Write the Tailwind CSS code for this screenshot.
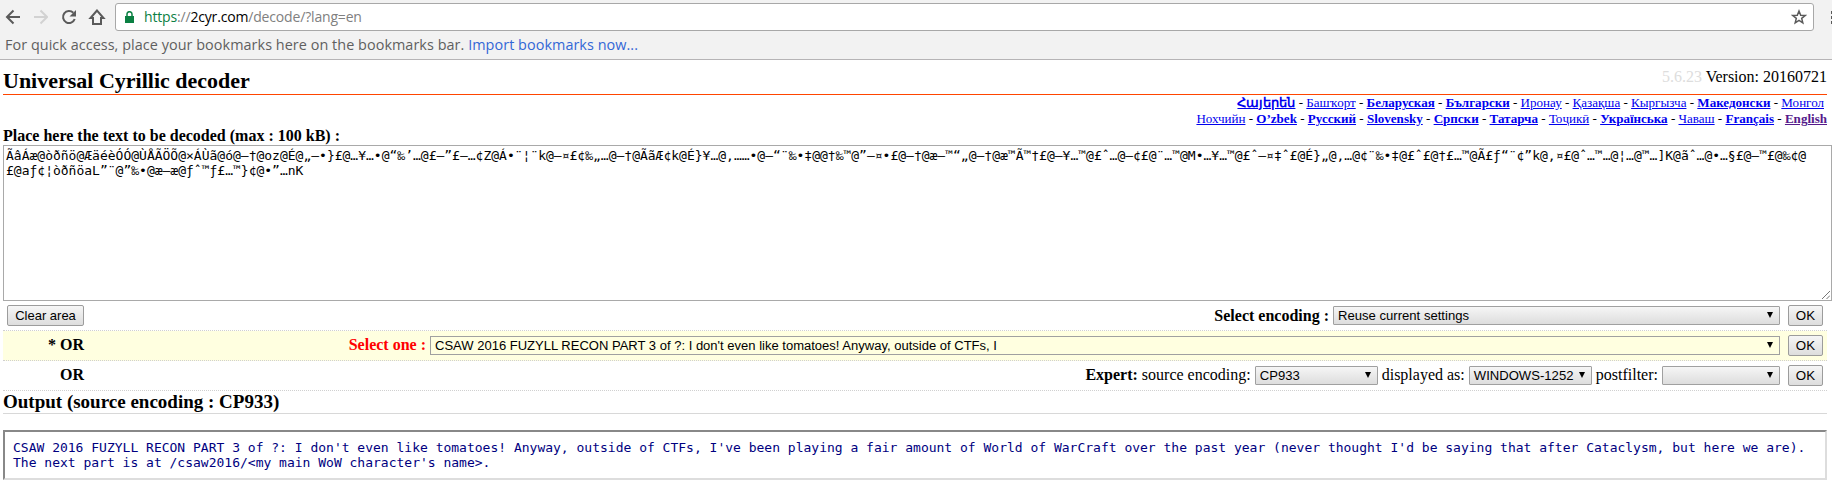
<!DOCTYPE html>
<html lang="en">
<head>
<meta charset="utf-8">
<title>Universal Cyrillic decoder</title>
<script src="https://cdn.jsdelivr.net/npm/@tailwindcss/browser@4"></script>
</head>
<body class="w-[1832px] h-[493px] overflow-hidden bg-white text-black text-base leading-[18px] font-['Liberation_Serif',serif]">
<header class="h-[60px] bg-[#f2f2f2] border-b border-[#b6b4b6] font-['Open_Sans',sans-serif]">
  <div class="flex items-center h-[34px] pl-[4px]">
    <div class="flex gap-[12px] w-[111px] shrink-0">
      <svg class="w-4 h-4 shrink-0" viewBox="0 0 16 16" fill="none" stroke="#5a5a5a" stroke-width="2"><path d="M16 8H3.500M9.500 1.500L3 8l6.500 6.500"/></svg>
      <svg class="w-4 h-4 shrink-0" viewBox="0 0 16 16" fill="none" stroke="#d2d2d2" stroke-width="2"><path d="M2 8h12.500M8.500 1.500L15 8l-6.500 6.500"/></svg>
      <svg class="w-4 h-4 shrink-0" viewBox="0 0 16 16" fill="none" stroke="#5a5a5a" stroke-width="2"><path d="M14.700 10A6 6 0 1 1 13.300 3.800"/><path d="M16 1v6.500H9.500z" fill="#5a5a5a" stroke="none"/></svg>
      <svg class="w-4 h-4 shrink-0 overflow-visible" viewBox="0 0 16 16" fill="none" stroke="#5a5a5a" stroke-width="2"><path d="M9 1.500L2.500 9H5v6h8V9h2.500z"/></svg>
    </div>
    <div class="flex items-center w-[1699px] h-[28px] shrink-0 bg-white border border-[#a8a8a8] rounded-[3px] pl-[9px] pr-[6px]">
      <svg class="w-[9px] h-[12px]" viewBox="0 0 9 12"><path d="M0 5h9v7H0z" fill="#0b8043"/><path d="M2 6V3a2.500 2.300 0 0 1 5 0v3" fill="none" stroke="#0b8043" stroke-width="1.500"/></svg>
      <div class="ml-[10px] text-[14px] tracking-[-0.17px] text-[#808080] whitespace-nowrap"><span class="text-[#0b8043]">https</span>://<span class="text-black">2cyr.com</span>/decode/?lang=en</div>
      <svg class="ml-auto w-4 h-4" viewBox="0 0 16 16" fill="none" stroke="#5a5a5a" stroke-width="1.500"><path d="M8 2l1.700 4.200 4.500.3-3.500 2.900 1.100 4.400L8 11.400l-3.800 2.400 1.100-4.400L1.800 6.500l4.500-.3z"/></svg>
    </div>
    <div class="flex flex-col gap-[2px] ml-[17px] shrink-0"><span class="size-[3px] bg-[#5a5a5a]"></span><span class="size-[3px] bg-[#5a5a5a]"></span><span class="size-[3px] bg-[#5a5a5a]"></span></div>
  </div>
  <div class="pl-[5px] h-[22px] leading-[22px] text-[14.400px] tracking-[0.055px] text-[#5f5f5f] whitespace-nowrap">For quick access, place your bookmarks here on the bookmarks bar. <span class="text-[#3367d6]">Import bookmarks now...</span></div>
</header>
<main class="ml-[3px] w-[1829px]">
  <div class="flex justify-between w-[1824px] h-[35px] border-b border-[#ff4500]">
    <h1 class="text-[22px] font-bold leading-[24px] pt-[9px]">Universal Cyrillic decoder</h1>
    <div class="pt-[8px]"><span class="text-[#ddd]">5.6.23</span> Version: 20160721</div>
  </div>
  <nav class="w-[1824px] text-right text-[13.050px] h-[32px] leading-[16px] text-black [&_a]:text-[#00e] [&_a]:underline [&_b_a]:font-bold">
    <div class="pr-[3px]"><b><a>Հայերեն</a></b> - <a>Башҡорт</a> - <b><a>Беларуская</a></b> - <b><a>Български</a></b> - <a>Иронау</a> - <a>Қазақша</a> - <a>Кыргызча</a> - <b><a>Македонски</a></b> - <a>Монгол</a></div>
    <div><a>Нохчийн</a> - <b><a>O’zbek</a></b> - <b><a>Русский</a></b> - <b><a>Slovensky</a></b> - <b><a>Српски</a></b> - <b><a>Татарча</a></b> - <a>Тоҷикӣ</a> - <b><a>Українська</a></b> - <a>Чаваш</a> - <b><a>Français</a></b> - <b><a class="text-[#551a8b]!">English</a></b></div>
  </nav>
  <div class="h-[18px] font-bold">Place here the text to be decoded (max : 100 kB) :</div>
  <div class="relative h-[156px] w-[1829px] border border-[#a9a9a9] px-[2px] py-[2px] font-['DejaVu_Sans_Mono',monospace] text-[13px] leading-[15px] whitespace-pre"><span>ÃâÁæ@òðñö@ÆäéèÓÓ@ÙÅÃÖÕ@×ÁÙã@ó@–†@oz@É@„–•}£@…¥…•@“‰’…@£–”£–…¢Z@Á•¨¦¨k@–¤£¢‰„…@–†@ÃãÆ¢k@É}¥…@‚……•@—“¨‰•‡@@†‰™@”–¤•£@–†@æ–™“„@–†@æ™Ã™†£@–¥…™@£ˆ…@—¢£@¨…™@M•…¥…™@£ˆ–¤‡ˆ£@É}„@‚…@¢¨‰•‡@£ˆ£@†£…™@Ã£ƒ“¨¢”k@‚¤£@ˆ…™…@¦…@™…]K@ãˆ…@•…§£@—™£@‰¢@</span>
<span>£@aƒ¢¦òðñöaL”¨@”‰•@æ–æ@ƒˆ™ƒ£…™}¢@•”…nK</span>
    <svg class="absolute right-[1px] bottom-[1px] w-[8px] h-[8px]" viewBox="0 0 8 8" stroke="#777" stroke-width="1"><path d="M0 8L8 0M4.500 8L8 4.500"/></svg>
  </div>
  <div class="w-[1824px]">
    <div class="flex items-center h-[30px] border-b border-dotted border-[#d0d0d0] pl-[4px] pr-[4px]">
      <button class="w-[77px] h-[21px] border border-[#9c9c9c] rounded-[2px] bg-linear-to-b from-[#f6f6f6] to-[#dddddd] font-['Liberation_Sans',sans-serif] text-[13px] leading-[18px]">Clear area</button>
      <b class="ml-auto mr-[4px]">Select encoding :</b>
      <div class="flex items-center justify-between w-[447px] h-[19px] border border-[#a0a0a0] rounded-[1px] bg-linear-to-b from-[#f6f6f6] to-[#dddddd] pl-[4px] pr-[6px] font-['Liberation_Sans',sans-serif] text-[13.100px] leading-[17px]"><span>Reuse current settings</span><svg class="w-[6px] h-[6px] mb-[2px]" viewBox="0 0 6 6"><path d="M0 0h6L3 6z"/></svg></div>
      <button class="ml-[8px] w-[35px] h-[21px] border border-[#9c9c9c] rounded-[2px] bg-linear-to-b from-[#f6f6f6] to-[#dddddd] font-['Liberation_Sans',sans-serif] text-[13.333px] leading-[18px]">OK</button>
    </div>
    <div class="flex items-center h-[30px] border-b border-dotted border-[#d0d0d0] bg-[#ffffe0] pr-[4px]">
      <b class="w-[81px] text-right pb-[2px]">* OR</b>
      <b class="ml-auto mr-[4px] text-[#f00] pb-[2px]">Select one :</b>
      <div class="flex items-center justify-between w-[1350px] h-[19px] border border-[#a0a0a0] pl-[4px] pr-[6px] font-['Liberation_Sans',sans-serif] text-[13.020px] leading-[17px]"><span>CSAW 2016 FUZYLL RECON PART 3 of ?: I don't even like tomatoes! Anyway, outside of CTFs, I</span><svg class="w-[6px] h-[6px] mb-[2px]" viewBox="0 0 6 6"><path d="M0 0h6L3 6z"/></svg></div>
      <button class="ml-[8px] w-[35px] h-[21px] border border-[#9c9c9c] rounded-[2px] bg-linear-to-b from-[#f6f6f6] to-[#dddddd] font-['Liberation_Sans',sans-serif] text-[13.333px] leading-[18px]">OK</button>
    </div>
    <div class="flex items-center h-[30px] border-b border-dotted border-[#d0d0d0] pr-[4px]">
      <b class="w-[81px] text-right pb-[2px]">OR</b>
      <span class="ml-auto mr-[4px] pb-[1px]"><b>Expert:</b> source encoding:</span>
      <div class="flex items-center justify-between w-[123px] h-[19px] border border-[#a0a0a0] rounded-[1px] bg-linear-to-b from-[#f6f6f6] to-[#dddddd] pl-[4px] pr-[6px] font-['Liberation_Sans',sans-serif] text-[13.100px] leading-[17px]"><span>CP933</span><svg class="w-[6px] h-[6px] mb-[2px]" viewBox="0 0 6 6"><path d="M0 0h6L3 6z"/></svg></div>
      <span class="mx-[4px] pb-[1px]">displayed as:</span>
      <div class="flex items-center justify-between w-[123px] h-[19px] border border-[#a0a0a0] rounded-[1px] bg-linear-to-b from-[#f6f6f6] to-[#dddddd] pl-[4px] pr-[6px] font-['Liberation_Sans',sans-serif] text-[13.100px] leading-[17px]"><span>WINDOWS-1252</span><svg class="w-[6px] h-[6px] mb-[2px]" viewBox="0 0 6 6"><path d="M0 0h6L3 6z"/></svg></div>
      <span class="mx-[4px] pb-[1px]">postfilter:</span>
      <div class="flex items-center justify-end w-[118px] h-[19px] border border-[#a0a0a0] rounded-[1px] bg-linear-to-b from-[#f6f6f6] to-[#dddddd] pr-[6px]"><svg class="w-[6px] h-[6px] mb-[2px]" viewBox="0 0 6 6"><path d="M0 0h6L3 6z"/></svg></div>
      <button class="ml-[8px] w-[35px] h-[21px] border border-[#9c9c9c] rounded-[2px] bg-linear-to-b from-[#f6f6f6] to-[#dddddd] font-['Liberation_Sans',sans-serif] text-[13.333px] leading-[18px]">OK</button>
    </div>
    <h2 class="h-[23px] leading-[22px] border-b border-[#d8d8d8] text-[19px] font-bold">Output (source encoding : CP933)</h2>
    <pre class="mt-[16px] h-[50px] border-2 border-t-[#888] border-l-[#888] border-r-[#ddd] border-b-[#ddd] pl-[8px] pt-[8px] font-['DejaVu_Sans_Mono',monospace] text-[13px] leading-[15px] text-[#000080]">CSAW 2016 FUZYLL RECON PART 3 of ?: I don't even like tomatoes! Anyway, outside of CTFs, I've been playing a fair amount of World of WarCraft over the past year (never thought I'd be saying that after Cataclysm, but here we are).
The next part is at /csaw2016/&lt;my main WoW character's name&gt;.</pre>
  </div>
</main>
</body>
</html>
